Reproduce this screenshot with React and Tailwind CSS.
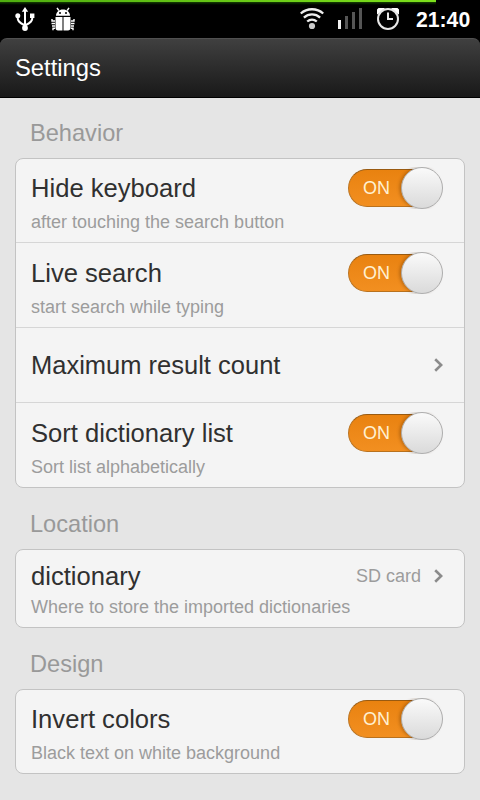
import React, { useState } from 'react';

const SECTIONS = [
    {
        title: 'Behavior',
        rows: [
            { label: 'Hide keyboard', hint: 'after touching the search button', toggle: true },
            { label: 'Live search', hint: 'start search while typing', toggle: true },
            { label: 'Maximum result count' },
            { label: 'Sort dictionary list', hint: 'Sort list alphabetically', toggle: true },
        ],
    },
    {
        title: 'Location',
        rows: [{ label: 'dictionary', hint: 'Where to store the imported dictionaries', value: 'SD card' }],
    },
    {
        title: 'Design',
        rows: [{ label: 'Invert colors', hint: 'Black text on white background', toggle: true }],
    },
];

function UsbIcon() {
    return (
        <svg width="20" height="24" viewBox="0 0 20 24" fill="none" stroke="#fff" strokeWidth="2">
            <path d="M10 3v17M2.500 9c0 5 1.500 6.500 7.500 9.500M17.500 9c0 5-1.500 6.500-7.500 9.500" />
            <path d="M10 0l3.200 4.800H6.800z" fill="#fff" stroke="none" />
            <circle cx="10" cy="21" r="2.900" fill="#fff" stroke="none" />
            <circle cx="2.800" cy="8.800" r="2.500" fill="#fff" stroke="none" />
            <path d="M15 6.500h4.400v4.500H15z" fill="#fff" stroke="none" />
        </svg>
    );
}

function BugIcon() {
    return (
        <svg width="24" height="24" viewBox="0 0 24 24" fill="#fff">
            <path d="M5 8.800C5 5 8 2.500 12 2.500s7 2.500 7 6.300z" />
            <path d="M4.500 10h7v13.500H7c-1.500 0-2.500-1-2.500-2.500zM12.500 10h7v11c0 1.500-1 2.500-2.500 2.500h-4.500z" />
            <path
                d="M7.800 3.500L6 .8M16.200 3.500L18 .8M4 14H1v-2M4 16.500H.5M4 19H1M4 21.300H2v2M20 14h3v-2M20 16.500h3.500M20 19h3M20 21.300h2v2"
                fill="none"
                stroke="#fff"
                strokeWidth="1.400"
            />
            <circle cx="9" cy="6" r="1" fill="#000" />
            <circle cx="15" cy="6" r="1" fill="#000" />
        </svg>
    );
}

function WifiIcon() {
    return (
        <svg width="24" height="22" viewBox="0 0 24 22" fill="none" stroke="#eee" strokeWidth="2.300">
            <path d="M.8 5.500C7-.2 17-.2 23.200 5.500M3.900 9.600c4.600-4.200 11.600-4.200 16.200 0M7.200 13.500c2.800-2.400 6.800-2.400 9.600 0" />
            <circle cx="12" cy="18" r="3.100" fill="#ccc" stroke="none" />
        </svg>
    );
}

function SignalIcon() {
    return (
        <svg width="25" height="22" viewBox="0 0 25 22" fill="#555">
            <path d="M0 12h3v9H0z" fill="#f2f2f2" />
            <path d="M7 8h3v13H7zM14 4h3v17h-3zM21 0h3v21h-3z" />
        </svg>
    );
}

function AlarmIcon() {
    return (
        <svg width="24" height="24" viewBox="0 0 24 24" fill="none" stroke="#e8e8e8" strokeWidth="2">
            <path d="M1 7.500V2.500L2.500 1H8l2 2zM23 7.500V2.500L21.500 1H16l-2 2z" fill="#fff" stroke="none" />
            <circle cx="12" cy="12" r="10" fill="#000" />
            <path d="M12 5.500V12h5" />
        </svg>
    );
}

function Chevron() {
    return (
        <svg width="10" height="14" viewBox="0 0 10 14" fill="none" stroke="#8b8b8b" strokeWidth="2.600">
            <path d="M2.200 1.200L8.200 7l-6 5.800" />
        </svg>
    );
}

function Toggle() {
    const [on, setOn] = useState(true);

    return (
        <button
            onClick={() => setOn(!on)}
            className={`relative mt-[2px] flex h-[38px] w-[94px] items-center rounded-full border ${on
                ? 'border-[#b9711d] border-t-[#995a10] bg-linear-to-b from-[#e9820f] to-[#f28f20] pl-[14px] text-[#fff0d2]'
                : 'border-[#aaa] bg-[#ccc] pl-[44px] text-[#777]'
                } text-[18px] leading-none`}
        >
            {on ? 'ON' : 'OFF'}
            <span
                className={`absolute -top-[3px] h-[42px] w-[42px] rounded-full border border-[#adadad] bg-linear-to-b from-[#fafafa] to-[#dadada] ${on
                    ? '-right-[2px] shadow-[-2px_0_3px_rgba(90,45,0,0.3)] [clip-path:inset(0_0_0_-6px)]'
                    : '-left-[2px]'
                    }`}
            />
        </button>
    );
}

function SettingRow({ row, first }) {
    // Without a hint the label is centered in a lower cell
    if (!row.hint) {
        return (
            <div className="flex h-[75px] items-center justify-between border-t border-[#d6d6d6] pr-[21px] pl-[15px]">
                <span className="text-[25.500px] leading-[30px] text-[#303030]">{row.label}</span>
                <Chevron />
            </div>
        );
    }

    return (
        <div
            className={`flex justify-between pl-[15px] ${first ? '' : 'border-t border-[#d6d6d6] pt-px'} ${row.toggle
                ? `${first ? 'h-[83px]' : 'h-[85px]'} pr-[22px]`
                : 'h-[77px] pr-[21px]'
                }`}
        >
            <div className={row.toggle ? 'pt-[14px]' : 'pt-[11px]'}>
                <div className="text-[25.600px] leading-[30px] whitespace-nowrap text-[#303030]">{row.label}</div>
                <div className={`text-[18px] leading-[22px] whitespace-nowrap text-[#9c9c9c] ${row.toggle ? 'mt-[8px]' : 'mt-[5px]'}`}>
                    {row.hint}
                </div>
            </div>
            {row.toggle ? (
                <div className="pt-[8px]">
                    <Toggle />
                </div>
            ) : (
                <div className="-ml-24 flex h-[52px] items-center gap-[12px] text-[18px] text-[#9c9c9c]">
                    {row.value}
                    <Chevron />
                </div>
            )}
        </div>
    );
}

export default function App() {
    return (
        <div className="h-[800px] w-[480px] overflow-hidden bg-[#e5e5e5] font-['Liberation_Sans',Arial,sans-serif]">
            <div className="bg-black">
                <div className="h-[2px] w-[436px] bg-linear-to-r from-[#4fae10] to-[#7de01c]" />
                <div className="h-[36px] w-full">
                    <div className="h-[4px] w-[436px] bg-linear-to-b from-[#174000] to-black" />
                    <div className="flex h-[26px] items-center pr-[10px] pl-[15px] text-white">
                        <UsbIcon />
                        <div className="ml-[16px]">
                            <BugIcon />
                        </div>
                        <div className="ml-auto flex items-center">
                            <WifiIcon />
                            <div className="ml-[14px]">
                                <SignalIcon />
                            </div>
                            <div className="ml-[13px]">
                                <AlarmIcon />
                            </div>
                            <span className="ml-[16px] w-[54px] pt-px text-[21.200px] leading-none font-bold">21:40</span>
                        </div>
                    </div>
                </div>
                <div className="flex h-[60px] items-center rounded-t-[7px] border-t border-b border-t-[#505050] border-b-black bg-linear-to-b from-[#404040] to-[#191919] pl-[15px] text-[23.800px] text-white">
                    Settings
                </div>
            </div>

            <div className="px-[15px]">
                {SECTIONS.map((section, i) => (
                    <div key={section.title}>
                        <div className={`pb-[11px] pl-[15px] text-[23.600px] leading-[28px] text-[#999] ${i === 0 ? 'pt-[21px]' : 'pt-[22px]'}`}>
                            {section.title}
                        </div>
                        <div className="rounded-[8px] border border-[#c3c3c3] bg-[#f4f4f4]">
                            {section.rows.map((row, j) => (
                                <SettingRow key={row.label} row={row} first={j === 0} />
                            ))}
                        </div>
                    </div>
                ))}
            </div>
        </div>
    );
}
